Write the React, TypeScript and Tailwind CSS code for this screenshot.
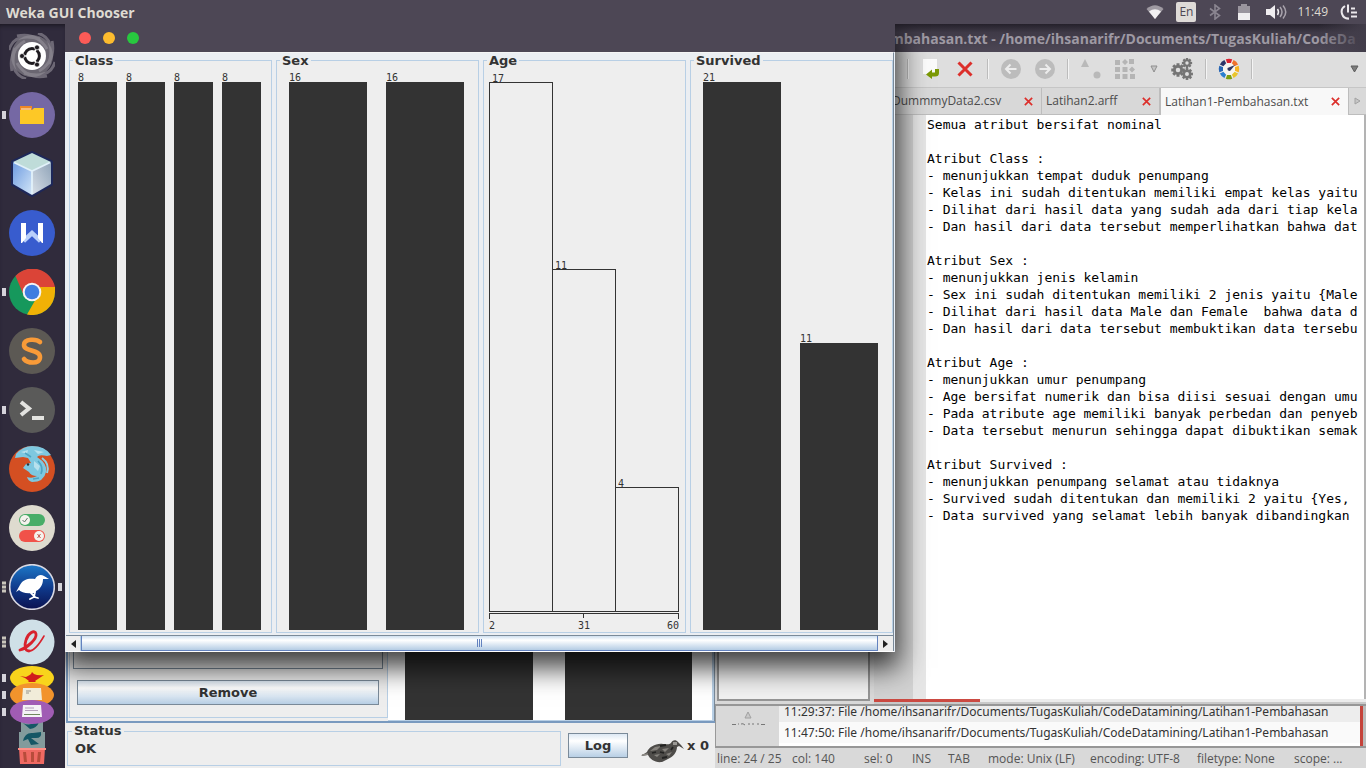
import React from 'react';

const editorText = `Semua atribut bersifat nominal

Atribut Class :
- menunjukkan tempat duduk penumpang
- Kelas ini sudah ditentukan memiliki empat kelas yaitu
- Dilihat dari hasil data yang sudah ada dari tiap kela
- Dan hasil dari data tersebut memperlihatkan bahwa dat

Atribut Sex :
- menunjukkan jenis kelamin
- Sex ini sudah ditentukan memiliki 2 jenis yaitu {Male
- Dilihat dari hasil data Male dan Female  bahwa data d
- Dan hasil dari data tersebut membuktikan data tersebu

Atribut Age :
- menunjukkan umur penumpang
- Age bersifat numerik dan bisa diisi sesuai dengan umu
- Pada atribute age memiliki banyak perbedan dan penyeb
- Data tersebut menurun sehingga dapat dibuktikan semak

Atribut Survived :
- menunjukkan penumpang selamat atau tidaknya
- Survived sudah ditentukan dan memiliki 2 yaitu {Yes,
- Data survived yang selamat lebih banyak dibandingkan`;

/* ---------- Top panel ---------- */

function TopPanel() {
  return (
    <header className="flex h-6 shrink-0 items-center justify-between bg-[#4d4755] pr-2 pl-[6px] font-['Open_Sans','Noto_Sans',sans-serif] text-[#dfdbd2]">
      <h1 className="text-[14px] font-bold">Weka GUI Chooser</h1>
      <div className="flex items-center">
        <svg width="18" height="14" viewBox="0 0 18 14" className="mr-3">
          <path d="M9 14 L0.5 4 Q9 -3.5 17.5 4Z" fill="#9f9aa2" />
          <path d="M9 14 L3 6.5 Q9 2 15 6.5Z" fill="#f2f0f2" />
        </svg>
        <span className="mr-3 flex h-5 w-5 items-center justify-center rounded-[2px] bg-[#dfdbd8] text-[12px] text-[#4d4755]">
          En
        </span>
        <svg width="14" height="16" viewBox="0 0 14 16" className="mr-4" fill="none" stroke="#8a8590" strokeWidth="1.6">
          <path d="M2 4.5 L11.5 11.5 L7 15 V1 L11.5 4.5 L2 11.5" />
        </svg>
        <svg width="12" height="16" viewBox="0 0 12 16" className="mr-4">
          <path d="M3 0 H9 V2 H12 V16 H0 V2 H3Z" fill="#9a959e" />
          <path d="M0 9 H12 V16 H0Z" fill="#f0eef0" />
        </svg>
        <svg width="21" height="16" viewBox="0 0 21 16" className="mr-[10px]" fill="none" strokeWidth="1.5">
          <path d="M0 5 H4 L9 1 V15 L4 11 H0Z" fill="#f0eef0" />
          <path d="M11.5 5 Q13.5 8 11.5 11" stroke="#f0eef0" />
          <path d="M14 3 Q18 8 14 13" stroke="#a8a3ac" />
          <path d="M17 1.5 Q22.5 8 17 14.5" stroke="#a8a3ac" />
        </svg>
        <time className="mr-3 text-[12px]">11:49</time>
        <svg width="18" height="16" viewBox="0 0 18 16" fill="none" stroke="#ebe8ec" strokeWidth="2">
          <path d="M5 2 A6.8 6.8 0 0 0 9 14.6" />
          <path d="M8 0.5 V8.5 M11 4.5 H15 M11 8.5 H17 M11 12.5 H17" />
        </svg>
      </div>
    </header>
  );
}

/* ---------- Launcher ---------- */

type LauncherItem = { name: string; pips: number; active?: boolean; art: React.ReactNode };

const launcherItems: LauncherItem[] = [
  {
    name: 'Dash',
    pips: 0,
    art: (
      <>
        <circle cx="23" cy="23" r="21" fill="#6a6671" />
        <g fill="none" stroke="#96929b" strokeWidth="3" opacity="0.6">
          <path d="M0 17 Q5 -1 31 6" />
          <path d="M29 0 Q47 6 40 31" />
          <path d="M46 29 Q41 47 15 40" />
          <path d="M17 46 Q-1 40 6 15" />
          <path d="M8 3 Q28 -1 38 16" />
          <path d="M43 8 Q47 28 30 38" />
          <path d="M38 43 Q18 47 8 30" />
          <path d="M3 38 Q-1 18 16 8" />
        </g>
        <circle cx="23" cy="23" r="14" fill="#fff" />
        <circle cx="23" cy="23" r="7.4" fill="none" stroke="#1e1b20" strokeWidth="3" />
        <path d="M23 23 L12 23 M23 23 L29 33 M23 23 L29 13" stroke="#fff" strokeWidth="1.5" />
        <g fill="#1e1b20" stroke="#fff" strokeWidth="0.7">
          <circle cx="13" cy="23" r="2.5" />
          <circle cx="28" cy="14.4" r="2.5" />
          <circle cx="28" cy="31.6" r="2.5" />
        </g>
      </>
    ),
  },
  {
    name: 'Files',
    pips: 1,
    art: (
      <>
        <circle cx="23" cy="23" r="23" fill="#7568a4" />
        <path d="M11 14 H23 V18 H11Z" fill="#f08726" />
        <path d="M11 18 H23 L25 16 H35 V32 H11Z" fill="#fdc826" />
        <path d="M12 17 H22" stroke="#fff1cf" />
      </>
    ),
  },
  {
    name: 'VirtualBox',
    pips: 0,
    art: (
      <>
        <defs>
          <linearGradient id="cubeLeft" x1="0" y1="0" x2="1" y2="1">
            <stop offset="0" stopColor="#6e9be0" />
            <stop offset="1" stopColor="#d3e6f8" />
          </linearGradient>
          <linearGradient id="cubeRight" x1="1" y1="0" x2="0" y2="1">
            <stop offset="0" stopColor="#8fa3b8" />
            <stop offset="1" stopColor="#d9e0e8" />
          </linearGradient>
        </defs>
        <path d="M23 2 L42 11 V33 L23 44 L4 33 V11Z" fill="#1d2759" stroke="#1d2759" strokeWidth="4" strokeLinejoin="round" />
        <path d="M23 2 L42 11 L23 20 L4 11Z" fill="#bfdcd9" />
        <path d="M4 11 L23 20 V44 L4 33Z" fill="url(#cubeLeft)" />
        <path d="M42 11 L23 20 V44 L42 33Z" fill="url(#cubeRight)" />
        <path d="M5 11.500 L23 20 L41 11.500 M23 20 V43" stroke="#e2f1fa" strokeWidth="1.8" fill="none" />
      </>
    ),
  },
  {
    name: 'WPS Writer',
    pips: 0,
    art: (
      <>
        <circle cx="23" cy="23" r="23" fill="#385cce" />
        <path d="M14.5 31 L23 23 L31.5 31" fill="none" stroke="#bad0fa" strokeWidth="4.500" />
        <path d="M12 13 H17 V28 L13 33 H12Z M29 13 H34 V33 H33 L29 28Z" fill="#fff" />
      </>
    ),
  },
  {
    name: 'Chrome',
    pips: 1,
    art: (
      <>
        <circle cx="23" cy="23" r="23" fill="#16985c" />
        <path d="M23 23 H46 A23 23 0 0 1 18 45.5 L28 28Z" fill="#f0b106" />
        <path d="M6.5 7 A23 23 0 0 1 46 18 H23 L15 27Z" fill="#db4437" />
        <path d="M23 18 H46 V23 H23Z" fill="#f0b106" />
        <circle cx="23" cy="23" r="9.3" fill="#f4f4f4" />
        <circle cx="23" cy="23" r="7.3" fill="#3f7de0" />
      </>
    ),
  },
  {
    name: 'Sublime Text',
    pips: 0,
    art: (
      <>
        <circle cx="23" cy="23" r="23" fill="#5c5954" />
        <path
          d="M31 14 C28 11 15 10 15 17 C15 24 31 21 31 29 C31 37 18 35 15 31"
          fill="none"
          stroke="#f99b38"
          strokeWidth="4.6"
          strokeLinecap="round"
        />
      </>
    ),
  },
  {
    name: 'Terminal',
    pips: 1,
    art: (
      <>
        <circle cx="23" cy="23" r="23" fill="#5a5a59" />
        <path d="M12 15 L20 21.5 L12 28" fill="none" stroke="#e3e3e0" strokeWidth="4" />
        <path d="M23 31 H35" stroke="#e3e3e0" strokeWidth="4" />
      </>
    ),
  },
  {
    name: 'Firefox',
    pips: 0,
    art: (
      <>
        <circle cx="23" cy="23" r="23" fill="#d44f22" />
        <path d="M7 8 Q14 0 23 0 Q36 0 42 9 L38 10 Q30 8 28 11 Q39 18 37 26 Q35 36 23 36 Q19 35 18 31 Q23 33 28 30 Q22 30 20 26 L14 22 L17 18 L22 17 L19 12 L14 11 L6 12Z" fill="#7ec8e0" />
        <path d="M12 6 L19 4 L18 8 Z M25 4 L35 6 L29 8Z M25 15 L31 20 L29 25 L25 21Z" fill="#b7e1ed" />
        <path d="M29 15 Q35 21 32 28 M16 7 L22 11 M24 33 L30 32" stroke="#4ea5c4" strokeWidth="1.6" fill="none" />
        <path d="M33 12 Q41 18 38 27" stroke="#90d2e5" strokeWidth="2" fill="none" />
        <circle cx="19" cy="18.500" r="1.2" fill="#27343c" />
      </>
    ),
  },
  {
    name: 'Tweak Tool',
    pips: 0,
    art: (
      <>
        <circle cx="23" cy="23" r="23" fill="#dedbcf" />
        <rect x="10" y="9" width="26" height="12" rx="6" fill="#48ad68" />
        <rect x="10" y="25" width="26" height="12" rx="6" fill="#f15249" />
        <circle cx="16" cy="15" r="5" fill="#f4f3ed" />
        <circle cx="30" cy="31" r="5" fill="#f4f3ed" />
        <path d="M13.5 15 L15.5 17 L18.5 13" stroke="#62746a" fill="none" />
        <path d="M28.5 29 L31.5 33 M31.5 29 L28.5 33" stroke="#c15850" fill="none" />
      </>
    ),
  },
  {
    name: 'Weka',
    pips: 3,
    active: true,
    art: (
      <>
        <defs>
          <linearGradient id="wekaSky" x1="0" y1="0" x2="0" y2="1">
            <stop offset="0" stopColor="#1d78c8" />
            <stop offset="0.55" stopColor="#0f3788" />
            <stop offset="1" stopColor="#0b1250" />
          </linearGradient>
        </defs>
        <circle cx="23" cy="23" r="22.3" fill="url(#wekaSky)" stroke="#d9d9e3" strokeWidth="1.6" />
        <path d="M7 28 L11 21 C14 15 20 14 26 15 C28 11 32 10 35 12 L40 15 L34 15 C34 21 31 25 27 27 L26 29 L23 29 C17 30 12 28 10 26Z" fill="#fff" />
        <path d="M22 29 L26 33 M26 28 L25 33 L21 35 M25 33 L29 34" stroke="#fff" strokeWidth="1.8" fill="none" strokeLinecap="round" />
      </>
    ),
  },
];

function Pips({ count }: { count: number }) {
  return (
    <span className="absolute top-1/2 left-[2px] flex -translate-y-1/2 flex-col gap-px">
      {Array.from({ length: count }, (_, i) => (
        <i key={i} className={count === 1 ? 'h-2 w-1 bg-[#d5d3da]' : 'h-[3px] w-1 bg-[#c9c5bb]'} />
      ))}
    </span>
  );
}

function FoldedIcon({ name, fill, pip, children }: { name: string; fill: string; pip?: boolean; children: React.ReactNode }) {
  return (
    <button aria-label={name} className="relative -mt-[7px] flex h-6 w-full shrink-0 justify-center">
      {pip && <Pips count={1} />}
      <svg width="44" height="24" viewBox="0 0 44 24">
        <ellipse cx="22" cy="12" rx="22" ry="12" fill={fill} />
        {children}
      </svg>
    </button>
  );
}

function Launcher() {
  return (
    <nav
      aria-label="Launcher"
      className="flex w-[65px] shrink-0 flex-col overflow-hidden bg-[#302b3c] pt-[9px] pr-px shadow-[inset_0_4px_5px_-3px_#17141d]"
    >
      {launcherItems.map((item) => (
        <button key={item.name} aria-label={item.name} className="relative mb-[13px] flex h-[46px] w-full shrink-0 justify-center">
          {item.pips > 0 && <Pips count={item.pips} />}
          <svg width="46" height="46" viewBox="0 0 46 46">
            {item.art}
          </svg>
          {item.active && <i className="absolute top-1/2 right-[2px] h-2 w-1 -translate-y-1/2 bg-[#d5d3da]" />}
        </button>
      ))}
      <button aria-label="Document Viewer" className="relative -mt-[4px] mb-[8px] flex h-[46px] w-full shrink-0 justify-center">
        <Pips count={3} />
        <svg width="46" height="46" viewBox="0 0 46 46">
          <circle cx="23" cy="23" r="22.5" fill="#cfe0e7" />
          <g fill="none" stroke="#d8232e" strokeLinecap="round">
            <path d="M11 31 C18 29 28 20 27 15 C26 10 19 14 17 21 C15 27 16 32 20 32" strokeWidth="2.800" />
            <path d="M20 32 C26 32 31 24 35 17" strokeWidth="1.600" />
          </g>
        </svg>
      </button>
      <FoldedIcon name="Geany" fill="#f8d41c" pip>
        <path d="M10 10 L16 11 Q20 9 21 8 L22 6 L24 8 Q28 10 34 9 L28 13 L25 15 L26 16 H18 L19 15 L15 12Z" fill="#d11c1c" />
      </FoldedIcon>
      <FoldedIcon name="Notes" fill="#f2932c" pip>
        <path d="M13 5 H31 L32 17 H12Z" fill="#f1ecd9" />
        <path d="M16 8 H21 M16 10 H19" stroke="#95938b" />
      </FoldedIcon>
      <FoldedIcon name="Documents" fill="#a05cb4" pip>
        <path d="M13 5 H31 L32 17 H12Z" fill="#f4f2f5" />
        <path d="M15 8 H24 M15 10.500 H28" stroke="#b49fbb" />
        <path d="M14 14.500 H30" stroke="#70865e" />
      </FoldedIcon>
      <button aria-label="Disks and trash" className="-mt-[4px] flex shrink-0 justify-center">
        <svg width="28" height="45" viewBox="0 0 28 45">
          <path d="M3 0 H25 V12 H27 V28 H1 V12 H3Z" fill="#839b9c" />
          <path d="M5 3 Q12 7 17 1 L21 2 Q19 8 12 9Z M5 21 Q7 12 15 13 L23 12 Q24 18 18 18 L13 18 L21 24 L13 25 L10 19Z" fill="#155765" />
          <path d="M1 28 H27 L26 44 H2Z" fill="#ef6962" />
          <path d="M0 28 H28 V30 H0Z" fill="#ff8f86" />
          <path d="M5 32 H8 L9 42 H6Z M13 32 H16 V42 H13Z M20 32 H23 L22 42 H19Z" fill="#b84c3b" />
        </svg>
      </button>
    </nav>
  );
}

/* ---------- Geany editor ---------- */

function ToolSep() {
  return <i className="mx-[5px] h-5 w-[2px] shrink-0 border-r border-l border-r-[#f4f4f4] border-l-[#bcbcbc]" />;
}

function ToolButton({ name, children, narrow }: { name: string; children: React.ReactNode; narrow?: boolean }) {
  return (
    <button aria-label={name} className={`flex h-8 shrink-0 items-center justify-center ${narrow ? 'w-6' : 'w-[34px]'}`}>
      {children}
    </button>
  );
}

function CrossMark({ size }: { size: number }) {
  return (
    <svg width={size} height={size} viewBox="0 0 16 16" stroke="#dc2f2b" strokeWidth="3" fill="none">
      <path d="M1.5 1.5 L14.5 14.5 M14.5 1.5 L1.5 14.5" />
    </svg>
  );
}

const gearTeeth = [0, 45, 90, 135];

function Gear({ x, y, r }: { x: number; y: number; r: number }) {
  return (
    <g transform={`translate(${x} ${y})`}>
      {gearTeeth.map((a) => (
        <rect key={a} x={-r * 0.3} y={-r * 1.35} width={r * 0.6} height={r * 2.7} transform={`rotate(${a})`} fill="#757575" />
      ))}
      <circle r={r} fill="#757575" />
      <circle r={r * 0.45} fill="#dedede" />
    </g>
  );
}

const wheelColors = ['#d92231', '#f0712b', '#f5b324', '#e9c52b', '#7e9e12', '#2a7fcf', '#2766b5', '#2c3467'];

function Toolbar() {
  return (
    <div role="toolbar" className="flex h-9 shrink-0 items-center border-b border-[#c6c6c6] bg-[#dedede] pb-[2px] pl-[187px]">
      <ToolSep />
      <ToolButton name="Reload file">
        <svg width="18" height="20" viewBox="0 0 18 20">
          <path d="M1 0 H15 V15 H1Z" fill="#fbfbfb" />
          <path d="M4 15.500 L10 10.500 V13.500 H13 V10 H17 V14 Q17 17.500 13 17.500 H10 V20Z" fill="#7b9906" />
        </svg>
      </ToolButton>
      <ToolButton name="Close file">
        <CrossMark size={16} />
      </ToolButton>
      <ToolSep />
      <ToolButton name="Back">
        <svg width="20" height="20" viewBox="0 0 20 20" fill="none" stroke="#ececec" strokeWidth="2">
          <circle cx="10" cy="10" r="10" fill="#bcbcbc" stroke="none" />
          <path d="M15.500 10 H5 M9.500 5.500 L5 10 L9.500 14.500" />
        </svg>
      </ToolButton>
      <ToolButton name="Forward">
        <svg width="20" height="20" viewBox="0 0 20 20" fill="none" stroke="#ececec" strokeWidth="2">
          <circle cx="10" cy="10" r="10" fill="#bcbcbc" stroke="none" />
          <path d="M4.500 10 H15 M10.500 5.500 L15 10 L10.500 14.500" />
        </svg>
      </ToolButton>
      <ToolSep />
      <ToolButton name="Compile">
        <svg width="20" height="20" viewBox="0 0 20 20" fill="#b9b9b9">
          <path d="M4 0 L8 8 H0Z" />
          <circle cx="16" cy="16" r="3.500" />
        </svg>
      </ToolButton>
      <ToolButton name="Build">
        <svg width="20" height="20" viewBox="0 0 20 20" fill="#b5b5b5">
          <path d="M0 1 H5 V6 H0Z M7 3 L10 0 L13 3 L10 6Z M14 0 H19 V5 H14Z M0 8 H5 V13 H0Z M7.500 8 H12.500 V13 H7.500Z M14 10.500 L17 7.500 L20 10.500 L17 13.500Z M0 15 H5 V20 H0Z M7.500 15 H12.500 V20 H7.500Z M15 15 H20 V20 H15Z" />
        </svg>
      </ToolButton>
      <ToolButton name="Build options" narrow>
        <svg width="8" height="8" viewBox="0 0 8 8">
          <path d="M1 1 H7 L4 7Z" fill="#c5c5c5" stroke="#8f8f8f" />
        </svg>
      </ToolButton>
      <ToolButton name="Run">
        <svg width="24" height="22" viewBox="0 0 24 22">
          <Gear x={7} y={12} r={5} />
          <Gear x={16} y={5} r={3.8} />
          <Gear x={16} y={16} r={4.4} />
        </svg>
      </ToolButton>
      <ToolSep />
      <ToolButton name="Choose color">
        <svg width="22" height="22" viewBox="-11 -11 22 22">
          <circle r="9" fill="#f6f4ef" />
          {wheelColors.map((c, i) => (
            <path key={c} d="M-3.200 -9.700 Q0 -10.800 3.200 -9.700 L2 -6 H-2Z" fill={c} transform={`rotate(${i * 45})`} />
          ))}
          <path d="M-1.500 -1 L6 -4 L1 2 Q-2 2 -1.500 -1Z" fill="#303560" />
        </svg>
      </ToolButton>
      <ToolSep />
      <span className="flex-1" />
      <ToolButton name="More tools" narrow>
        <svg width="9" height="8" viewBox="0 0 9 8">
          <path d="M1 1 H8 L4.500 7Z" fill="#7c7c7c" stroke="#5d5d5d" />
        </svg>
      </ToolButton>
    </div>
  );
}

function Tab({ label, className, selected }: { label: string; className: string; selected?: boolean }) {
  return (
    <div
      role="tab"
      aria-selected={!!selected}
      className={`flex h-[27px] shrink-0 items-center justify-between border-r border-[#bdbdbd] pr-2 text-[12px] text-[#4c4c4c] ${
        selected ? 'border-l bg-[#f8f8f8]' : 'border-b bg-[#d8d8d8]'
      } ${className}`}
    >
      <span className="whitespace-nowrap">{label}</span>
      <button aria-label={`Close ${label}`}>
        <CrossMark size={9} />
      </button>
    </div>
  );
}

function EditorWindow() {
  return (
    <section
      aria-label="Geany"
      className="absolute inset-y-0 right-0 left-[650px] flex flex-col overflow-hidden bg-[#d9d9d9] font-['Open_Sans','Noto_Sans',sans-serif]"
    >
      <div className="relative flex h-7 shrink-0 items-center overflow-hidden bg-gradient-to-b from-[#25212b] via-[#3f3a47] via-30% to-[#4d4755] pl-[175px]">
        <h2 className="text-[14px] font-bold whitespace-nowrap text-[#9e99a3]">
          mbahasan.txt - /home/ihsanarifr/Documents/TugasKuliah/CodeDa
        </h2>
        <div className="absolute inset-y-0 right-0 w-12 bg-gradient-to-r from-transparent to-[#423d4a]" />
      </div>
      <Toolbar />
      <div className="flex min-h-0 flex-1">
        <aside className="mb-[3px] ml-[2px] w-[153px] shrink-0 border-2 border-t-0 border-[#959595] bg-[#f1f1f1]" />
        <div className="ml-1 flex min-w-0 flex-1 flex-col">
          <div role="tablist" className="flex h-[27px] shrink-0">
            <Tab label="DummmyData2.csv" className="w-[168px] pl-[18px]" />
            <Tab label="Latihan2.arff" className="w-[118px] pl-[4px]" />
            <Tab label="Latihan1-Pembahasan.txt" className="w-[189px] pl-[4px]" selected />
            <button aria-label="Scroll tabs right" className="flex flex-1 items-center justify-center border-b border-[#bdbdbd]">
              <svg width="7" height="8" viewBox="0 0 7 8">
                <path d="M1 1 L6 4 L1 7Z" fill="#c6c6c6" stroke="#a2a2a2" />
              </svg>
            </button>
          </div>
          <div className="flex min-h-0 flex-1 border-r-2 border-[#b3b3b3] bg-white">
            <div className="w-[39px] shrink-0 bg-[#d2d2d2]" />
            <div className="w-[13px] shrink-0 bg-[#e6e6e6]" />
            <textarea
              aria-label="Document text"
              wrap="off"
              spellCheck={false}
              defaultValue={editorText}
              className="min-w-0 flex-1 resize-none overflow-hidden bg-white pt-px pl-px font-['DejaVu_Sans_Mono',monospace] text-[13px] leading-[17px] text-black outline-none"
            />
          </div>
          <div className="h-[3px] shrink-0 bg-[#ececec]">
            <div className="h-[3px] w-[106px] bg-[#cb4a42]" />
          </div>
          <div className="h-[2px] shrink-0 bg-[#c9c9c9]" />
        </div>
      </div>
      <div className="flex h-11 shrink-0 border-y-2 border-[#979797]">
        <div className="flex w-[64px] shrink-0 flex-col items-center gap-1 border-l border-[#999] pt-[5px]">
          <svg width="8" height="8" viewBox="0 0 8 8">
            <path d="M4 1 L7 7 H1Z" fill="#c9c9c9" stroke="#a0a0a0" />
          </svg>
          <svg width="34" height="4" viewBox="0 0 34 4" fill="none" stroke="#777">
            <path d="M1 1.500 H5 M7 1 H8 M10 1 Q12 0 14 2 M17 1 H19 M22 0 V2 M27 0 V2 M30 1.500 H34" />
          </svg>
        </div>
        <ul className="flex min-w-0 flex-1 flex-col justify-end overflow-hidden border-r-[3px] border-[#c5433b] bg-white pb-[3px] font-['Noto_Sans',sans-serif] text-[12px] leading-[21px] whitespace-nowrap text-[#333]">
          <li className="bg-[#ededed] pl-[5px]">11:29:37: File /home/ihsanarifr/Documents/TugasKuliah/CodeDatamining/Latihan1-Pembahasan</li>
          <li className="bg-[#fafafa] pl-[5px]">11:47:50: File /home/ihsanarifr/Documents/TugasKuliah/CodeDatamining/Latihan1-Pembahasan</li>
        </ul>
        <i className="w-[3px] bg-[#bbb]" />
      </div>
      <footer className="flex h-5 shrink-0 items-center overflow-hidden bg-[#d9d9d9] pt-px pl-[2px] text-[12px] whitespace-nowrap text-[#555]">
        <span className="w-[75px] shrink-0">line: 24 / 25</span>
        <span className="w-[72px] shrink-0">col: 140</span>
        <span className="w-[48px] shrink-0">sel: 0</span>
        <span className="w-[36px] shrink-0">INS</span>
        <span className="w-[40px] shrink-0">TAB</span>
        <span className="w-[102px] shrink-0">mode: Unix (LF)</span>
        <span className="w-[107px] shrink-0">encoding: UTF-8</span>
        <span className="w-[97px] shrink-0">filetype: None</span>
        <span>scope: ...</span>
      </footer>
    </section>
  );
}

/* ---------- Weka explorer ---------- */

const metalButton =
  'border border-[#7a8a99] bg-gradient-to-b from-[#dde8f3] via-white via-30% to-[#b8cfe5] text-[13px] font-bold text-[#333]';

function ExplorerWindow() {
  return (
    <section
      aria-label="Weka Explorer"
      className="absolute bottom-0 left-0 flex h-[130px] w-[650px] flex-col bg-[#eee] pl-px font-['DejaVu_Sans',sans-serif] text-[#333]"
    >
      <div className="flex min-h-0 flex-1 border-b-2 border-l-2 border-[#7a9abf] bg-[#eee]">
        <div className="mb-[3px] ml-px flex w-[319px] shrink-0 flex-col border-r border-b border-l border-[#b8cfe5] pr-1 pb-3 pl-[3px]">
          <div className="flex-1 border border-t-0 border-[#7a8a99]" />
          <div className="mx-1 mt-[11px]">
            <button className={`h-[25px] w-full ${metalButton}`}>Remove</button>
          </div>
        </div>
        <div className="flex min-w-0 flex-1 gap-8 border-r-2 border-b border-[#b8cfe5] bg-white pr-5 pl-[17px]">
          <div className="flex-1 bg-[#333]" />
          <div className="flex-1 bg-[#333]" />
        </div>
        <i className="w-px bg-[#7a8a99]" />
      </div>
      <div className="flex h-[45px] shrink-0 items-center">
        <fieldset className="mb-px ml-px h-[42px] w-[494px] shrink-0 border border-[#b8cfe5] pl-[7px]">
          <legend className="ml-[-3px] px-[2px] text-[13px] leading-[14px] font-bold">Status</legend>
          <p className="text-[13px] leading-[22px] font-bold">OK</p>
        </fieldset>
        <button className={`ml-[7px] h-[25px] w-[60px] ${metalButton}`}>Log</button>
        <svg width="46" height="26" viewBox="0 0 46 26" className="mt-3 ml-3">
          <path d="M1 17 L7 13 C9 8 16 4 23 5 C27 5 29 6 31 4 C32 1 36 0 38 3 L41 6 L44 10 L39 7 L37 8 C37 13 33 18 28 20 L22 23 C15 24 10 20 8 16Z" fill="#4e4c49" />
          <path d="M10 12 L15 8 L21 7 L17 11Z M22 10 L29 9 L25 13Z M14 16 L20 15 L17 18Z M26 15 L32 13 L29 17Z" fill="#85827d" />
          <path d="M12 14 L16 13 M20 7 L26 6 M20 13 L24 14 M22 19 L27 18 M33 8 L31 11" stroke="#232322" strokeWidth="1.800" />
          <path d="M33 3 L37 3 L37 6 L33 6Z" fill="#9b9995" />
          <path d="M2 16 L8 15" stroke="#8c8984" strokeWidth="1.500" />
        </svg>
        <span className="ml-px text-[13px] font-bold whitespace-nowrap">x 0</span>
      </div>
    </section>
  );
}

/* ---------- Attribute histograms ---------- */

function PlotPanel({ title, children }: { title: string; children: React.ReactNode }) {
  return (
    <fieldset className="flex h-full w-[203px] shrink-0 flex-col border border-[#b8cfe5] bg-[#eee]">
      <legend className="ml-[3px] px-[2px] text-[13px] leading-[15px] font-bold">{title}</legend>
      {children}
    </fieldset>
  );
}

function NominalPlot({ values, barClass, rowClass }: { values: number[]; barClass: string; rowClass: string }) {
  const max = Math.max(...values);
  return (
    <div className={`mt-[14px] mb-[2px] flex min-h-0 flex-1 items-end ${rowClass}`}>
      {values.map((v, i) => (
        <div key={i} className={`relative bg-[#333] ${barClass}`} style={{ height: `${(v / max) * 100}%` }}>
          <span className="absolute bottom-full left-0 font-['DejaVu_Sans_Mono',monospace] text-[10px] leading-[9px]">{v}</span>
        </div>
      ))}
    </div>
  );
}

function NumericPlot({ values, ticks }: { values: number[]; ticks: number[] }) {
  const max = Math.max(...values);
  return (
    <div className="mt-[14px] mb-[2px] ml-[5px] flex min-h-0 w-[190px] flex-1 flex-col font-['DejaVu_Sans_Mono',monospace] text-[10px] leading-[9px]">
      <div className="flex min-h-0 flex-1 items-end border-b border-l border-[#333]">
        {values.map((v, i) => (
          <div key={i} className="relative w-[63px] border-t border-r border-[#333]" style={{ height: `${(v / max) * 100}%` }}>
            <span className="absolute bottom-full left-[2px]">{v}</span>
          </div>
        ))}
      </div>
      <svg width="190" height="8" viewBox="0 0 190 8" fill="none" stroke="#333" shapeRendering="crispEdges">
        <path d="M0.5 7 V1.500 H189.500 V7 M94.500 1 V6" />
      </svg>
      <div className="grid h-[10px] grid-cols-3 leading-[11px]">
        {ticks.map((t) => (
          <span key={t} className="text-center first:text-left last:text-right">
            {t}
          </span>
        ))}
      </div>
    </div>
  );
}

function PlotWindow() {
  return (
    <section
      aria-label="Attribute plots"
      className="absolute top-0 left-0 flex h-[628px] w-[830px] flex-col bg-[#e8eef6] font-['DejaVu_Sans',sans-serif] text-[#333] shadow-[0_12px_26px_4px_rgba(0,0,0,0.75)]"
    >
      <div className="flex h-7 shrink-0 items-center gap-3 bg-[#4d4755] pl-[14px]">
        <button aria-label="Close" className="h-3 w-3 rounded-full bg-[#fc5b57]" />
        <button aria-label="Minimize" className="h-3 w-3 rounded-full bg-[#fdbc2e]" />
        <button aria-label="Maximize" className="h-3 w-3 rounded-full bg-[#28c83f]" />
      </div>
      <div className="mx-px flex min-h-0 flex-1 gap-1 overflow-hidden border-t border-r border-t-[#f5f5f5] border-r-[#7a8a99] bg-[#ebeef2] pb-[2px] pl-[3px]">
        <PlotPanel title="Class">
          <NominalPlot values={[8, 8, 8, 8]} barClass="w-[39px]" rowClass="gap-[9px] pl-[8px]" />
        </PlotPanel>
        <PlotPanel title="Sex">
          <NominalPlot values={[16, 16]} barClass="w-[78px]" rowClass="gap-[19px] pl-[12px]" />
        </PlotPanel>
        <PlotPanel title="Age">
          <NumericPlot values={[17, 11, 4]} ticks={[2, 31, 60]} />
        </PlotPanel>
        <PlotPanel title="Survived">
          <NominalPlot values={[21, 11]} barClass="w-[78px]" rowClass="gap-[19px] pl-[12px]" />
        </PlotPanel>
      </div>
      <div className="mx-px flex h-[17px] shrink-0 border-t border-b border-t-[#7a8a99] border-b-white bg-[#eee]">
        <button aria-label="Scroll left" className="flex w-[15px] items-center justify-center border-r border-[#b8cfe5]">
          <svg width="5" height="8" viewBox="0 0 5 8">
            <path d="M5 0 V8 L0 4Z" fill="#222" />
          </svg>
        </button>
        <div className="flex flex-1 items-center justify-center gap-px border-x border-b border-[#6382bf] bg-gradient-to-b from-[#cfe0f0] via-white via-30% to-[#b4cce4]">
          <i className="h-2 w-px bg-[#6382bf]" />
          <i className="h-2 w-px bg-[#6382bf]" />
          <i className="h-2 w-px bg-[#6382bf]" />
        </div>
        <button aria-label="Scroll right" className="flex w-[16px] items-center justify-center border-r border-[#7a8a99]">
          <svg width="5" height="8" viewBox="0 0 5 8">
            <path d="M0 0 V8 L5 4Z" fill="#222" />
          </svg>
        </button>
      </div>
    </section>
  );
}

export default function App() {
  return (
    <div className="flex h-screen w-full flex-col overflow-hidden">
      <TopPanel />
      <div className="flex min-h-0 flex-1">
        <Launcher />
        <main className="relative min-w-0 flex-1 overflow-hidden bg-[#302b3c]">
          <EditorWindow />
          <ExplorerWindow />
          <PlotWindow />
        </main>
      </div>
    </div>
  );
}
